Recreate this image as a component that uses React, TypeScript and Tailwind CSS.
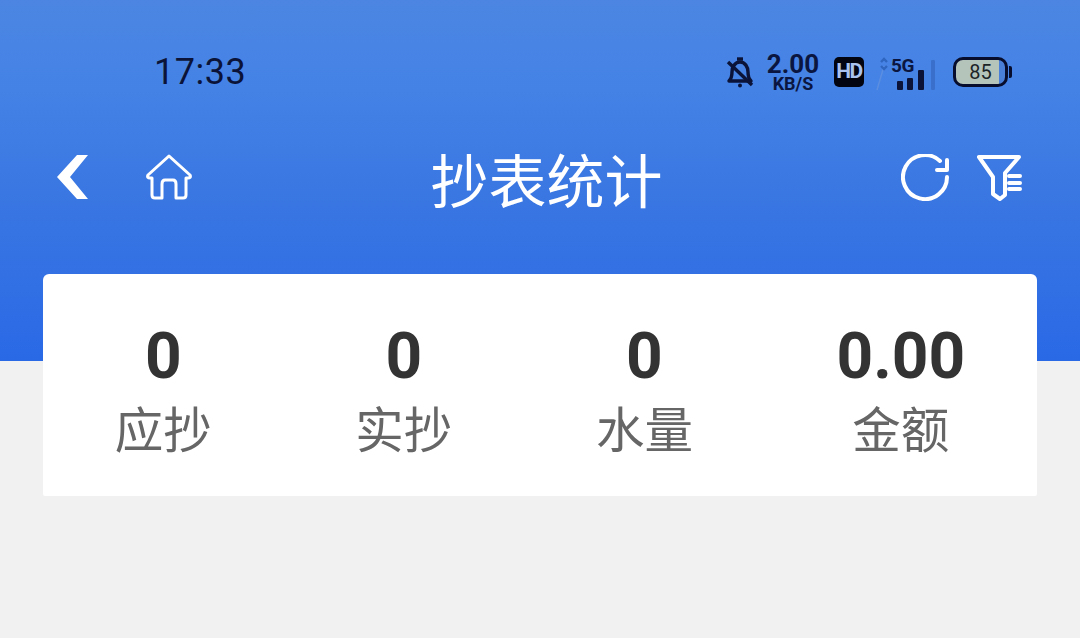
import React from "react";

const CJK = "font-['Roboto','Noto_Sans_CJK_SC',sans-serif]";

const stats = [
  { value: "0", label: "应抄" },
  { value: "0", label: "实抄" },
  { value: "0", label: "水量" },
  { value: "0.00", label: "金额" },
];

function StatusIcons() {
  return (
    <div className="flex items-center text-[#0b1640]">
      <svg width="28" height="32" viewBox="0 0 28 32" fill="none" stroke="#0b1438" strokeWidth="3.4" className="mr-[13px]">
        <path d="M3 25c2-2 3-4 3-9 0-5 3-10 8-10s8 5 8 10c0 5 1 7 3 9z" strokeLinejoin="round" />
        <path d="M11 3h6" />
        <path d="M2 6l24 23" />
        <circle cx="14" cy="29.5" r="2" fill="#0b1438" stroke="none" />
      </svg>
      <div className="flex w-[52px] flex-col items-center font-['Roboto',sans-serif]">
        <span className="text-[26px] leading-[23px] font-bold">2.00</span>
        <span className="text-[18px] leading-[15px] font-bold">KB/S</span>
      </div>
      <div className="ml-[15px] flex h-[30px] w-[30px] items-center justify-center rounded-[5px] bg-[#02040f] font-['Roboto',sans-serif] text-[21px] font-bold tracking-[-1.5px] text-[#a9c3ee]">
        HD
      </div>
      <div className="relative mr-[17px] ml-[12px] h-[40px] w-[60px]">
        <svg width="60" height="40" viewBox="0 0 60 40">
          <path d="M1 38l7-24" stroke="#5b8ee0" strokeWidth="1.5" fill="none" />
          <path d="M5 10l3-3 3 3M5 14l3 3 3-3" stroke="#2f66c0" strokeWidth="2.4" fill="none" />
          <rect x="21" y="29" width="6" height="9" rx="1" fill="#0b1438" />
          <rect x="31" y="26" width="6" height="12" rx="1" fill="#0b1438" />
          <rect x="42" y="18" width="6" height="20" rx="1" fill="#0b1438" />
          <rect x="55" y="8" width="4" height="30" rx="1" fill="#3a70cc" />
        </svg>
        <span className="absolute top-[4px] left-[15px] font-['Roboto',sans-serif] text-[19px] leading-none font-bold tracking-[-0.5px]">
          5G
        </span>
      </div>
      <div className="flex items-center">
        <div className="flex h-[30px] w-[55px] items-center justify-center rounded-[10px] border-[3px] border-[#070d2c] bg-[linear-gradient(to_right,#b5c4bb_0,#b5c4bb_88%,#4a7fd8_88%)] font-['Roboto',sans-serif] text-[20px] text-[#1c2428]">
          85
        </div>
        <div className="ml-[1px] h-[12px] w-[3px] rounded-r-[2px] bg-[#070d2c]" />
      </div>
    </div>
  );
}

export default function App() {
  return (
    <div className="min-h-[638px] bg-[#f1f1f1]">
      <div className="flex h-[361px] flex-col bg-[linear-gradient(to_bottom,#4c86e2_0%,#4482e6_25%,#3b78e2_50%,#2a69e6_100%)]">
        <div className="flex h-[144px] items-center justify-between pr-[68px] pl-[154px]">
          <span className="font-['Roboto',sans-serif] text-[36px] tracking-[0.5px] text-[#0b1438]">17:33</span>
          <StatusIcons />
        </div>
        <div className="flex h-[72px] items-center justify-between pr-[58px] pl-[57px]">
          <div className="mb-[6px] flex items-center gap-[56px]">
            <svg width="33" height="44" viewBox="0 0 33 44">
              <path d="M31 0H20L0 22l20 22h11L13 22z" fill="#fff" />
            </svg>
            <svg width="46" height="46" viewBox="0 0 46 46" fill="none" stroke="#fff" strokeWidth="3" strokeLinejoin="round" strokeLinecap="round">
              <path d="M23 2L2 21c-1 2 0 3 2 3h2v17c0 2 1 3 3 3h7V30c0-3 1-4 3-4h8c2 0 3 1 3 4v14h7c2 0 3-1 3-3V24h2c2 0 3-1 2-3z" />
            </svg>
          </div>
          <span className={`${CJK} mt-[5px] text-[58px] leading-none text-white`}>抄表统计</span>
          <div className="mb-[6px] flex items-center gap-[26px]">
            <svg width="48" height="47" viewBox="0 0 48 47" fill="none" stroke="#fff" strokeWidth="4" strokeLinecap="round" strokeLinejoin="round">
              <path d="M46 23a22 22 0 1 1-7-16" />
              <path d="M46 6v10H36" />
            </svg>
            <svg width="47" height="47" viewBox="0 0 47 47" fill="none" stroke="#fff" strokeWidth="4" strokeLinecap="round" strokeLinejoin="round">
              <path d="M4 3h40L30 19v22l-5 4-7-5V23z" />
              <path d="M34 22h11M34 29h11M34 35h11" />
            </svg>
          </div>
        </div>
      </div>
      <div className="mx-[43px] -mt-[87px] flex h-[222px] justify-around rounded-t-[6px] rounded-b-[2px] bg-white">
        {stats.map((s) => (
          <div key={s.label} className="flex flex-col items-center pt-[45px]">
            <span className="font-['Roboto',sans-serif] text-[64px] leading-[75px] font-bold text-[#333333]">{s.value}</span>
            <span className={`${CJK} mt-[7px] text-[48.5px] leading-[62px] text-[#666666]`}>{s.label}</span>
          </div>
        ))}
      </div>
    </div>
  );
}
